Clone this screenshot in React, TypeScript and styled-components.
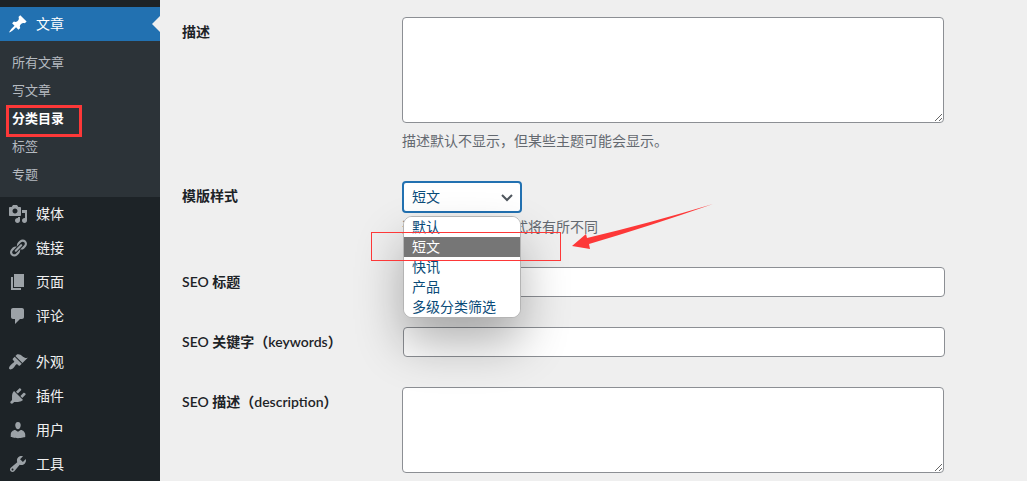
import React from "react";
import styled, { createGlobalStyle, css } from "styled-components";

const GlobalStyle = createGlobalStyle`
  *, *::before, *::after { box-sizing: border-box; }
  body {
    margin: 0;
    background: #efefef;
    color: #1d2327;
    font-family: "Open Sans", "Noto Sans CJK SC", sans-serif;
    font-size: 14px;
    line-height: 20px;
  }
  ul { list-style: none; margin: 0; padding: 0; }
  p { margin: 0; }
`;

const Layout = styled.div`
  display: flex;
  min-height: 100vh;
`;

const Sidebar = styled.nav`
  flex: none;
  width: 160px;
  padding-top: 7px;
  background: #1d2327;
`;

const MenuLink = styled.a<{ $current?: boolean }>`
  position: relative;
  display: flex;
  align-items: center;
  gap: 8px;
  height: 34px;
  padding-left: 8px;
  color: #f0f0f1;
  text-decoration: none;

  svg {
    width: 20px;
    height: 20px;
    fill: #9ca2a7;
  }

  ${(p) =>
    p.$current &&
    css`
      background: #2271b1;
      color: #fff;
      svg { fill: #fff; }
      &::after {
        content: "";
        position: absolute;
        right: 0;
        top: 9px;
        border: 8px solid transparent;
        border-left-width: 0;
        border-right-color: #efefef;
      }
    `}
`;

const MenuGroup = styled.ul`
  & + & { margin-top: 12px; }
`;

const Submenu = styled.ul`
  padding: 7px 0 9px;
  background: #2c3338;
  font-family: "Noto Sans CJK SC", sans-serif;
`;

const SubmenuItem = styled.li`
  position: relative;
`;

const SubmenuLink = styled.a<{ $current?: boolean }>`
  display: block;
  padding: 4px 12px;
  font-size: 13px;
  color: ${(p) => (p.$current ? "#fff" : "#b5bac0")};
  font-weight: ${(p) => (p.$current ? 700 : 400)};
  text-decoration: none;
`;

const SubmenuMark = styled.span`
  position: absolute;
  left: 6px;
  top: 1px;
  width: 76px;
  height: 32px;
  border: 3px solid #fd3838;
  pointer-events: none;
`;

const Main = styled.main`
  flex: 1;
  min-width: 0;
  padding: 2px 82px 0 22px;
`;

const Row = styled.div`
  display: grid;
  grid-template-columns: 220px minmax(0, 542px);
  padding: 15px 0;

  &:last-child { padding-bottom: 8px; }
`;

const Label = styled.label`
  padding-top: 5px;
  font-family: Lato, "Noto Sans CJK SC", sans-serif;
  font-weight: 600;
`;

const Field = styled.div`
  position: relative;
  display: flex;
  flex-direction: column;
`;

const control = css`
  border: 1px solid #8c8f94;
  border-radius: 4px;
  background: #fff;
  color: #2c3338;
  font: inherit;
`;

const TextInput = styled.input`
  ${control}
  width: 100%;
  height: 30px;
  margin-left: 1px;
  padding: 0 8px;
`;

const TextArea = styled.textarea<{ $height: number }>`
  ${control}
  display: block;
  width: 100%;
  height: ${(p) => p.$height}px;
  padding: 2px 6px;
  resize: vertical;
`;

const Hint = styled.p<{ $gap: number }>`
  margin-top: ${(p) => p.$gap}px;
  color: #646970;
`;

const SelectWrap = styled.div`
  position: relative;
  width: 120px;

  svg {
    position: absolute;
    right: 9px;
    top: 12px;
    width: 12px;
    height: 10px;
    pointer-events: none;
  }
`;

const Select = styled.select`
  ${control}
  appearance: none;
  display: block;
  width: 100%;
  height: 32px;
  padding: 0 24px 0 8px;
  border: 2px solid #2271b1;
  color: #0a4b78;
  outline: none;
`;

const Options = styled.ul`
  position: absolute;
  z-index: 1;
  left: 1px;
  top: 35px;
  width: 118px;
  overflow: hidden;
  border: 1px solid #b4b4b4;
  border-radius: 9px;
  background: #fff;
  box-shadow: 0 26px 48px rgba(0, 0, 0, 0.3);
`;

const Option = styled.li<{ $active: boolean }>`
  padding-left: 8px;
  background: ${(p) => (p.$active ? "#767676" : "#fff")};
  color: ${(p) => (p.$active ? "#fff" : "#0a4b78")};
`;

const OptionMark = styled.span`
  position: absolute;
  z-index: 2;
  left: -31px;
  top: 51px;
  width: 190px;
  height: 29px;
  border: 1px solid #fd3838;
  pointer-events: none;
`;

const Arrow = styled.svg`
  position: absolute;
  z-index: 2;
  left: 168px;
  top: 21px;
  width: 144px;
  height: 50px;
  fill: #fd3838;
  pointer-events: none;
`;

const icons = {
  post: "M10.44 3.02l1.82-1.82 6.36 6.35-1.83 1.82c-1.05-.68-2.48-.57-3.41.36l-.75.75c-.92.93-1.04 2.35-.35 3.41l-1.83 1.82-2.41-2.41-2.8 2.79c-.42.42-3.38 2.71-3.8 2.29s1.86-3.39 2.28-3.81l2.79-2.79L4.1 9.36l1.83-1.82c1.05.69 2.48.57 3.4-.36l.75-.75c.93-.92 1.05-2.35.36-3.41z",
  media:
    "M13 11V4c0-.55-.45-1-1-1h-1.67L9 1H5L3.67 3H2c-.55 0-1 .45-1 1v7c0 .55.45 1 1 1h10c.55 0 1-.45 1-1zM7 4.5c1.38 0 2.5 1.12 2.5 2.5S8.38 9.5 7 9.5 4.5 8.38 4.5 7 5.62 4.5 7 4.5zM14 6h5v10.5c0 1.38-1.12 2.5-2.5 2.5S14 17.88 14 16.5s1.12-2.5 2.5-2.5c.17 0 .34.02.5.05V9h-3V6zm-4 8.05V13h2v3.5c0 1.38-1.12 2.5-2.5 2.5S7 17.88 7 16.5 8.12 14 9.5 14c.17 0 .34.02.5.05z",
  links:
    "M17.74 2.76c1.68 1.69 1.68 4.41 0 6.1l-1.53 1.52c-1.12 1.12-2.7 1.47-4.14 1.09l2.62-2.61.76-.77.76-.76c.84-.84.84-2.2 0-3.04-.84-.85-2.2-.85-3.04 0l-.77.76-3.38 3.38c-.37-1.44-.02-3.02 1.1-4.14l1.52-1.53c1.69-1.68 4.42-1.68 6.1 0zM8.59 13.43l5.34-5.34c.42-.42.42-1.1 0-1.52-.44-.43-1.13-.39-1.53 0l-5.33 5.34c-.42.42-.42 1.1 0 1.52.44.43 1.13.39 1.52 0zm-.76 2.29l4.14-4.15c.38 1.44.03 3.02-1.09 4.14l-1.52 1.53c-1.69 1.68-4.41 1.68-6.1 0-1.68-1.68-1.68-4.42 0-6.1l1.53-1.52c1.12-1.12 2.7-1.47 4.14-1.1l-4.14 4.15c-.85.84-.85 2.2 0 3.05.84.84 2.2.84 3.04 0z",
  page: "M6 15V2h10v13H6zm-1 1h8v2H3V5h2v11z",
  comments:
    "M5 2h9c1.1 0 2 .9 2 2v7c0 1.1-.9 2-2 2h-2l-5 5v-5H5c-1.1 0-2-.9-2-2V4c0-1.1.9-2 2-2z",
  appearance:
    "M14.48 11.06L7.41 3.99l1.5-1.5c.5-.56 2.3-.47 3.51.32 1.21.8 1.43 1.28 2.91 2.1 1.18.64 2.45 1.26 4.45.85zm-.71.71L6.7 4.7 4.93 6.47c-.39.39-.39 1.02 0 1.41l1.06 1.06c.39.39.39 1.03 0 1.42-.6.6-1.43 1.11-2.21 1.69-.35.26-.7.53-1.01.84C1.43 14.23.4 16.08 1.4 17.07c.99 1 2.84-.03 4.18-1.36.31-.31.58-.66.85-1.02.57-.78 1.08-1.61 1.69-2.21.39-.39 1.02-.39 1.41 0l1.06 1.06c.39.39 1.02.39 1.41 0z",
  plugins:
    "M13.11 4.36L9.87 7.6 8 5.73l3.24-3.24c.35-.34 1.05-.2 1.56.32.52.51.66 1.21.31 1.55zm-8 1.77l.91-1.12 9.01 9.01-1.19.84c-.71.71-2.63 1.16-3.82 1.16H6.14L4.9 17.26c-.59.59-1.54.59-2.12 0-.59-.58-.59-1.53 0-2.12l1.24-1.24v-3.88c0-1.13.4-3.19 1.09-3.89zm7.26 3.97l3.24-3.24c.34-.35 1.04-.21 1.55.31.52.51.66 1.21.31 1.55l-3.24 3.25z",
  users:
    "M10 9.25c-2.27 0-2.73-3.44-2.73-3.44C7 4.02 7.82 2 9.97 2c2.16 0 2.98 2.02 2.71 3.81 0 0-.41 3.44-2.68 3.44zm0 2.57L12.72 10c2.39 0 4.52 2.33 4.52 4.53v2.49s-3.65 1.13-7.24 1.13c-3.65 0-7.24-1.13-7.24-1.13v-2.49c0-2.25 1.94-4.48 4.47-4.48z",
  tools:
    "M16.68 9.77c-1.34 1.34-3.3 1.67-4.95.99l-5.41 6.52c-.99.99-2.59.99-3.58 0s-.99-2.59 0-3.57l6.52-5.42c-.68-1.65-.35-3.61.99-4.95 1.28-1.28 3.12-1.62 4.72-1.06l-2.89 2.89 2.82 2.82 2.86-2.87c.53 1.58.18 3.39-1.08 4.65zM3.81 16.21c.4.39 1.04.39 1.43 0 .4-.4.4-1.04 0-1.43-.39-.4-1.03-.4-1.43 0-.39.39-.39 1.03 0 1.43z",
};

type IconName = keyof typeof icons;

const Icon = ({ name }: { name: IconName }) => (
  <svg viewBox="0 0 20 20" aria-hidden="true">
    <path d={icons[name]} />
  </svg>
);

const contentMenu: [IconName, string][] = [
  ["media", "媒体"],
  ["links", "链接"],
  ["page", "页面"],
  ["comments", "评论"],
];

const adminMenu: [IconName, string][] = [
  ["appearance", "外观"],
  ["plugins", "插件"],
  ["users", "用户"],
  ["tools", "工具"],
];

const postPages = ["所有文章", "写文章", "分类目录", "标签", "专题"];
const currentPage = "分类目录";

const templates = ["默认", "短文", "快讯", "产品", "多级分类筛选"];

const MenuItem = ({ icon, text }: { icon: IconName; text: string }) => (
  <li>
    <MenuLink href="#">
      <Icon name={icon} />
      {text}
    </MenuLink>
  </li>
);

export default function App() {
  const [template, setTemplate] = React.useState("短文");

  return (
    <Layout>
      <GlobalStyle />
      <Sidebar>
        <MenuGroup>
          <li>
            <MenuLink href="#" $current>
              <Icon name="post" />
              文章
            </MenuLink>
            <Submenu>
              {postPages.map((page) => (
                <SubmenuItem key={page}>
                  <SubmenuLink href="#" $current={page === currentPage}>
                    {page}
                  </SubmenuLink>
                  {page === currentPage && <SubmenuMark />}
                </SubmenuItem>
              ))}
            </Submenu>
          </li>
          {contentMenu.map(([icon, text]) => (
            <MenuItem key={icon} icon={icon} text={text} />
          ))}
        </MenuGroup>
        <MenuGroup>
          {adminMenu.map(([icon, text]) => (
            <MenuItem key={icon} icon={icon} text={text} />
          ))}
        </MenuGroup>
      </Sidebar>

      <Main>
        <Row>
          <Label htmlFor="description">描述</Label>
          <Field>
            <TextArea id="description" $height={106} />
            <Hint $gap={8}>描述默认不显示，但某些主题可能会显示。</Hint>
          </Field>
        </Row>
        <Row>
          <Label htmlFor="template">模版样式</Label>
          <Field>
            <SelectWrap>
              <Select
                id="template"
                value={template}
                onChange={(e) => setTemplate(e.target.value)}
              >
                {templates.map((name) => (
                  <option key={name}>{name}</option>
                ))}
              </Select>
              <svg viewBox="0 0 12 10" aria-hidden="true">
                <path d="M1 2l5 5 5-5" fill="none" stroke="#50575e" strokeWidth="2" />
              </svg>
              <Options aria-hidden="true">
                {templates.map((name) => (
                  <Option
                    key={name}
                    $active={name === template}
                    onClick={() => setTemplate(name)}
                  >
                    {name}
                  </Option>
                ))}
              </Options>
            </SelectWrap>
            <Hint $gap={4}>选择不同的模版样式将有所不同</Hint>
            <OptionMark />
            <Arrow viewBox="0 0 144 50" aria-hidden="true">
              <path d="M2 44L16 32L17 36Q80 21 143 2Q80 24 19 42L20 47Z" />
            </Arrow>
          </Field>
        </Row>
        <Row>
          <Label htmlFor="seo-title">SEO 标题</Label>
          <Field>
            <TextInput id="seo-title" type="text" />
          </Field>
        </Row>
        <Row>
          <Label htmlFor="seo-keywords">SEO 关键字（keywords）</Label>
          <Field>
            <TextInput id="seo-keywords" type="text" />
          </Field>
        </Row>
        <Row>
          <Label htmlFor="seo-description">SEO 描述（description）</Label>
          <Field>
            <TextArea id="seo-description" $height={86} />
          </Field>
        </Row>
      </Main>
    </Layout>
  );
}
